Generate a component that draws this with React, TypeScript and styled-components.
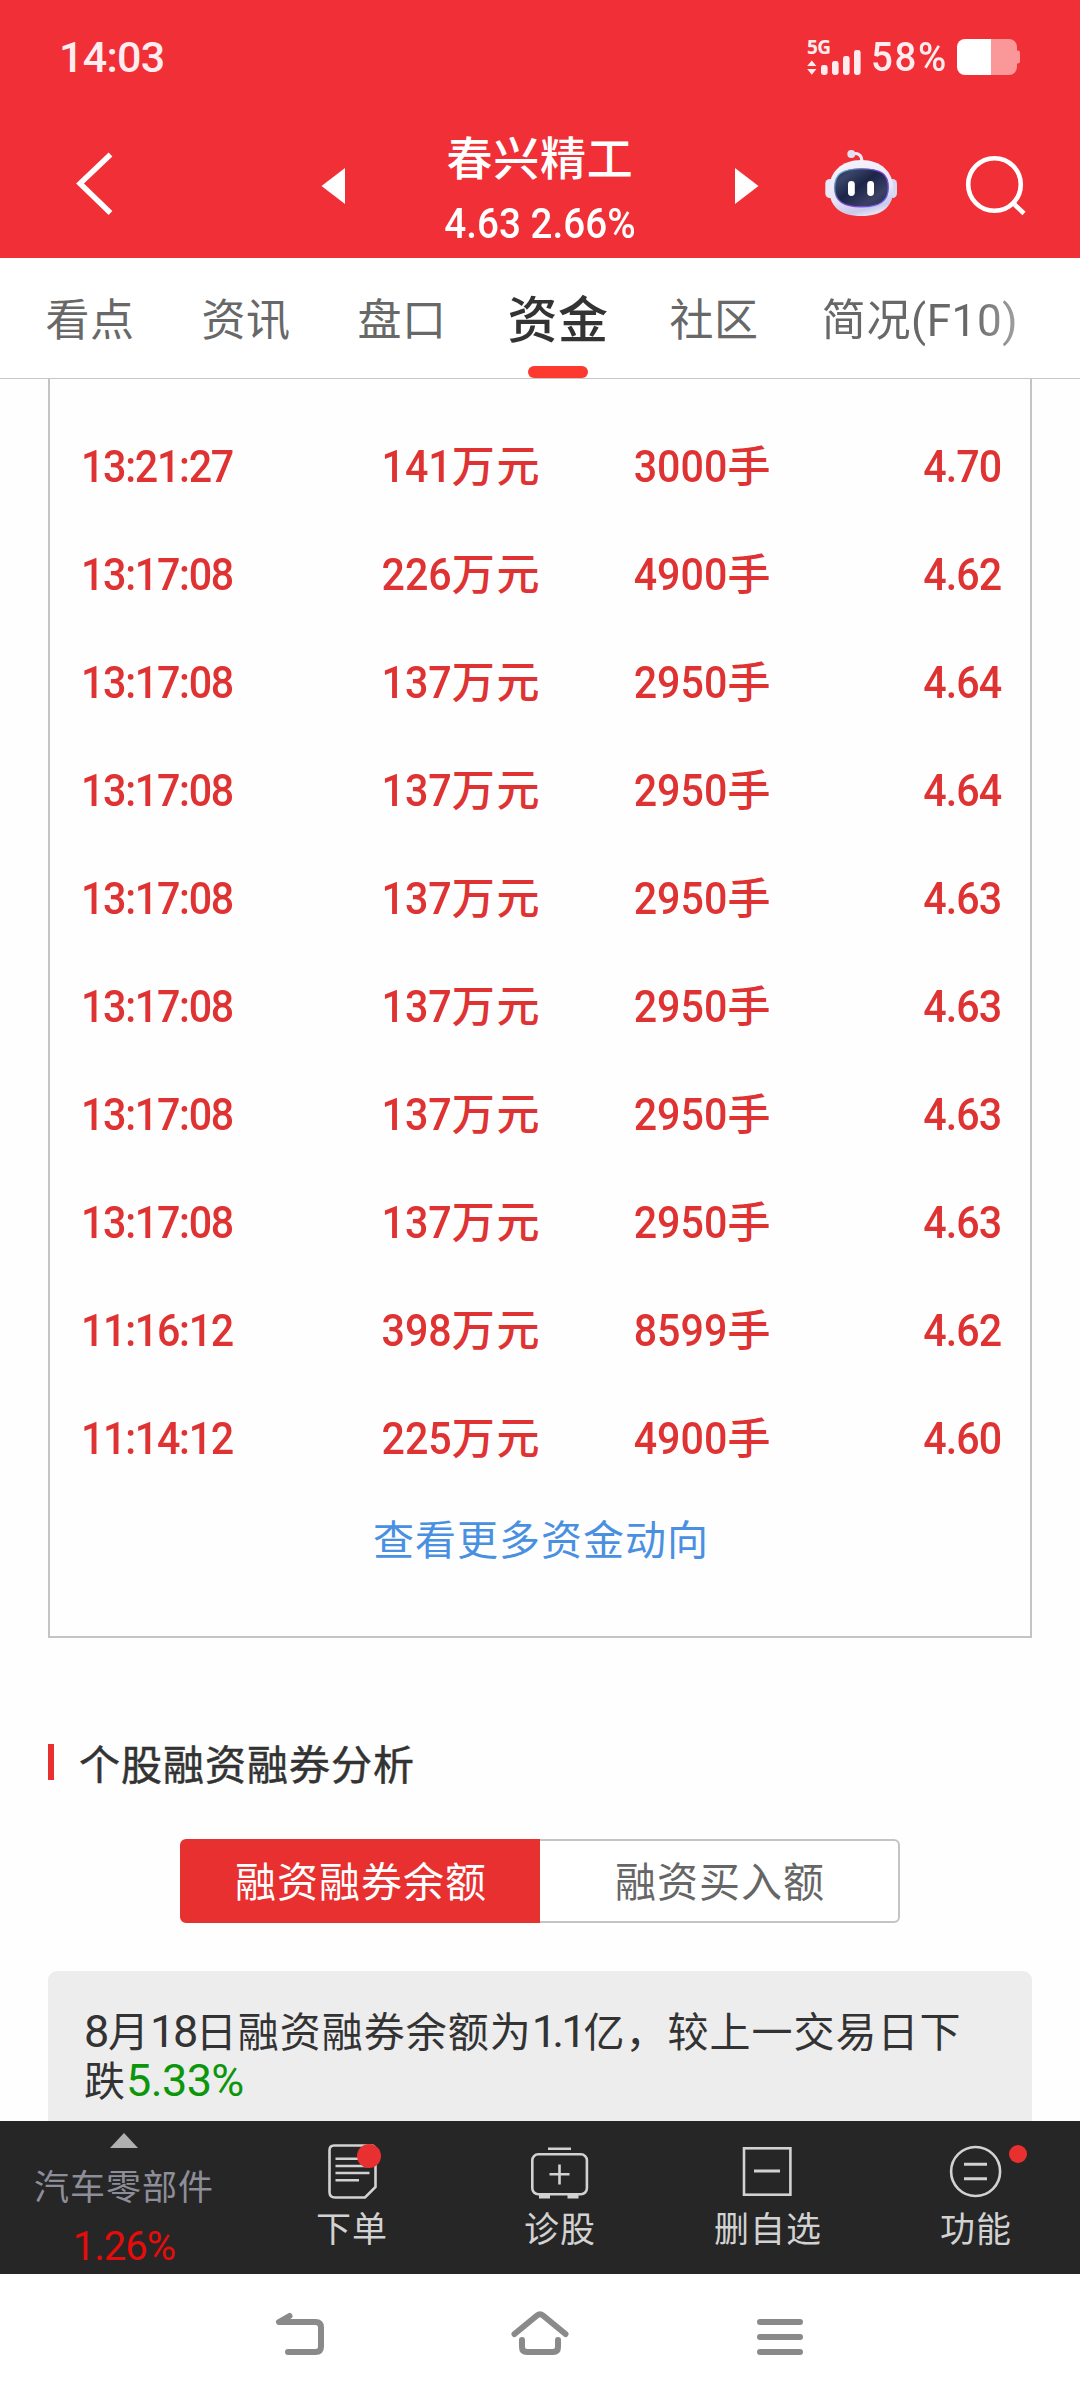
import React from 'react';
import styled, { createGlobalStyle } from 'styled-components';

const GlobalStyle = createGlobalStyle`
  *, *::before, *::after { box-sizing: border-box; }
  body {
    margin: 0;
    background: #fefefe;
    font-family: Roboto, "Noto Sans CJK SC", sans-serif;
    -webkit-font-smoothing: antialiased;
  }
  svg { display: block; flex: none; }
`;

const Screen = styled.div`
  width: 1080px;
  height: 2400px;
  display: flex;
  flex-direction: column;
  overflow: hidden;
  background: #fefefe;
`;

/* Latin digits, narrowed towards a DIN-like width */
const Num = styled.span<{ $scale?: number; $origin?: string; $gap?: number }>`
  display: inline-block;
  letter-spacing: ${p => p.$gap ?? 0}px;
  transform: scaleX(${p => p.$scale ?? 1});
  transform-origin: ${p => p.$origin ?? 'left'} center;
`;

/* ---------- header ---------- */

const Header = styled.header`
  flex: none;
  height: 258px;
  background: #f12f37;
  color: #fff;
`;

const StatusBar = styled.div`
  height: 114px;
  padding: 0 60px 0 59px;
  display: flex;
  align-items: center;
  justify-content: space-between;
`;

const Clock = styled.div`
  font-size: 43px;
  font-weight: 500;
  letter-spacing: -0.7px;
  line-height: 60px;
  color: #ffecee;
`;

const StatusRight = styled.div`
  display: flex;
  align-items: center;
`;

const Signal = styled.div`
  width: 56px;
  height: 36px;
  position: relative;
`;

const NetworkType = styled.span`
  position: absolute;
  left: 0;
  top: -1px;
  font-family: "Noto Sans", sans-serif;
  font-size: 19px;
  font-weight: 700;
  line-height: 18px;
  letter-spacing: -0.5px;
  color: #ffecee;
`;

const BatteryText = styled.span`
  width: 94px;
  padding-left: 8px;
  font-size: 40px;
  font-weight: 500;
  line-height: 38px;
  padding-top: 1px;
  color: #ffecee;
  white-space: nowrap;
`;

const TitleBar = styled.div`
  height: 144px;
  padding-left: 70px;
  display: flex;
  align-items: center;
`;

const TitleBlock = styled.div`
  width: 390px;
  height: 144px;
  padding-top: 12px;
  text-align: center;
  white-space: nowrap;
`;

const StockName = styled.div`
  font-size: 46px;
  font-weight: 500;
  letter-spacing: 0.8px;
  line-height: 66px;
`;

const StockQuote = styled.div`
  font-size: 42px;
  font-weight: 500;
  line-height: 64px;
`;

const Spacer = styled.div<{ $w: number }>`
  flex: none;
  width: ${p => p.$w}px;
`;

/* ---------- tabs ---------- */

const TabBar = styled.nav`
  flex: none;
  height: 121px;
  padding-left: 12px;
  display: flex;
  background: #fff;
  border-bottom: 1px solid #c6c6c6;
`;

const Tab = styled.div<{ $active?: boolean; $wide?: boolean }>`
  position: relative;
  flex: none;
  width: ${p => (p.$wide ? 256 : 156)}px;
  height: 120px;
  text-align: center;
  white-space: nowrap;
  line-height: 127px;
  font-size: ${p => (p.$active ? 50 : 44)}px;
  font-weight: ${p => (p.$active ? 500 : 400)};
  letter-spacing: 0.6px;
  color: ${p => (p.$active ? '#333' : '#686868')};
  ${p => p.$wide && 'mask-image: linear-gradient(to right, #000 180px, transparent 300px);'}
`;

const TabMark = styled.span`
  position: absolute;
  left: 48px;
  bottom: 0;
  width: 60px;
  height: 12px;
  border-radius: 6px;
  background: #fc3a30;
`;

/* ---------- trade list ---------- */

const Content = styled.main`
  flex: none;
  height: 1742px;
  overflow: hidden;
  padding: 0 48px;
`;

const Card = styled.section`
  height: 1259px;
  padding: 34px 29px 0 31px;
  border: 2px solid #c4c4c4;
  border-top: 0;
`;

const TradeRow = styled.div`
  height: 108px;
  display: grid;
  grid-template-columns: 190px 270px 231px 1fr;
  align-items: center;
  font-size: 45px;
  font-weight: 500;
  line-height: 108px;
  color: #df3232;
  white-space: nowrap;
`;

const Cell = styled.div<{ $right?: boolean }>`
  text-align: ${p => (p.$right ? 'right' : 'left')};
`;

const Unit = styled.span`
  font-size: 43px;
  letter-spacing: 1.6px;
`;

const MoreLink = styled.div`
  line-height: 96px;
  text-align: center;
  font-size: 41px;
  letter-spacing: 1px;
  color: #4a90e2;
`;

/* ---------- margin analysis ---------- */

const SectionTitle = styled.h2`
  margin: 94px 0 0;
  height: 68px;
  display: flex;
  align-items: center;
  gap: 25px;
  font-size: 41px;
  font-weight: 400;
  -webkit-text-stroke: 0.5px #333;
  letter-spacing: 1px;
  line-height: 68px;
  color: #333;

  &::before {
    content: '';
    width: 6px;
    height: 36px;
    margin-top: -8px;
    background: #e93030;
  }
`;

const Segmented = styled.div`
  width: 720px;
  height: 84px;
  margin: 39px auto 48px;
  display: grid;
  grid-template-columns: 1fr 1fr;
`;

const Segment = styled.div<{ $on?: boolean }>`
  height: 84px;
  padding-left: 2px;
  border: 2px solid ${p => (p.$on ? '#e23333' : '#c4c4c4')};
  border-left-width: ${p => (p.$on ? 2 : 0)}px;
  border-radius: ${p => (p.$on ? '6px 0 0 6px' : '0 6px 6px 0')};
  background: ${p => (p.$on ? '#e93030' : '#fff')};
  color: ${p => (p.$on ? '#fff' : '#666')};
  text-align: center;
  font-size: 41px;
  letter-spacing: 1px;
  line-height: 84px;
`;

const Summary = styled.div`
  height: 200px;
  padding: 38px 30px 0 36px;
  border-radius: 9px;
  background: #ededed;
  color: #333;
  font-size: 41px;
  letter-spacing: 1px;
  line-height: 49px;
`;

const SumNum = styled.span<{ $gap: number; $down?: boolean }>`
  font-size: 45px;
  font-kerning: none;
  line-height: 40px;
  letter-spacing: ${p => p.$gap}px;
  ${p => p.$down && 'color: #0c960c;'}
`;

/* ---------- bottom bars ---------- */

const ActionBar = styled.footer`
  flex: none;
  height: 153px;
  display: grid;
  grid-template-columns: 248px repeat(4, 208px);
  background: #262626;
  color: #d2d2d2;
`;

const Sector = styled.div`
  display: flex;
  flex-direction: column;
  align-items: center;
  padding-top: 12px;
`;

const SectorName = styled.div`
  margin-top: 17px;
  font-size: 35px;
  letter-spacing: 1px;
  line-height: 48px;
  color: #8e8e99;
`;

const SectorChange = styled.div`
  margin-top: 10px;
  font-size: 40px;
  letter-spacing: -1px;
  line-height: 48px;
  color: #e50c0c;
`;

const Action = styled.div`
  display: flex;
  flex-direction: column;
  align-items: center;
  padding-top: 19px;
  font-size: 35px;
  letter-spacing: 1px;
  line-height: 52px;
`;

const ActionIcon = styled.svg`
  margin-bottom: 3px;
  overflow: visible;
  fill: none;
  stroke: #d2d2d2;
  stroke-width: 2.6;
`;

const SystemNav = styled.div`
  flex: none;
  height: 126px;
  padding: 0 256px;
  display: flex;
  align-items: center;
  justify-content: space-between;
  background: #fff;
`;

const NavIcon = styled.svg`
  fill: none;
  stroke: #8a8a8a;
  stroke-width: 6;
  stroke-linecap: round;
  stroke-linejoin: round;
`;

const tabs = ['看点', '资讯', '盘口', '资金', '社区', '简况(F10)'];

const trades: [string, string, string, string][] = [
  ['13:21:27', '141', '3000', '4.70'],
  ['13:17:08', '226', '4900', '4.62'],
  ['13:17:08', '137', '2950', '4.64'],
  ['13:17:08', '137', '2950', '4.64'],
  ['13:17:08', '137', '2950', '4.63'],
  ['13:17:08', '137', '2950', '4.63'],
  ['13:17:08', '137', '2950', '4.63'],
  ['13:17:08', '137', '2950', '4.63'],
  ['11:16:12', '398', '8599', '4.62'],
  ['11:14:12', '225', '4900', '4.60'],
];

const SignalBars = () => (
  <svg width="56" height="36" viewBox="0 0 56 36" fill="#ffecee">
    <path d="M4.8 21.5 9.4 27H.2ZM.2 30H9.4L4.8 35.8Z" />
    <rect x="14" y="26" width="6.6" height="10" rx="2.4" />
    <rect x="25" y="22" width="6.6" height="14" rx="2.4" />
    <rect x="36" y="17" width="6.6" height="19" rx="2.4" />
    <rect x="47" y="11" width="6.6" height="25" rx="2.4" />
  </svg>
);

const Battery = () => (
  <svg width="63" height="36" viewBox="0 0 63 36">
    <path d="M34 0H52A8 8 0 0 1 60 8V11.5H61A2 2 0 0 1 63 13.5V22.5A2 2 0 0 1 61 24.5H60V28A8 8 0 0 1 52 36H34Z" fill="#f99799" />
    <path d="M34 0H8A8 8 0 0 0 0 8V28A8 8 0 0 0 8 36H34Z" fill="#fff" />
  </svg>
);

const Robot = () => (
  <svg width="74" height="72" viewBox="824 150 74 72">
    <defs>
      <linearGradient id="shell" x1="0.3" y1="0" x2="0.6" y2="1">
        <stop offset="0" stopColor="#f4f3fc" />
        <stop offset="0.6" stopColor="#e8e6f8" />
        <stop offset="0.88" stopColor="#c9c9ea" />
        <stop offset="1" stopColor="#e9e6f6" />
      </linearGradient>
      <linearGradient id="rim" x1="0" y1="0" x2="1" y2="0.7">
        <stop offset="0" stopColor="#7fd9f5" />
        <stop offset="0.3" stopColor="#5a6fb0" />
        <stop offset="0.6" stopColor="#8a3fd8" />
        <stop offset="1" stopColor="#6a5cf0" />
      </linearGradient>
      <linearGradient id="visor" x1="0" y1="0" x2="1" y2="1">
        <stop offset="0" stopColor="#2c3658" />
        <stop offset="0.2" stopColor="#3a4468" />
        <stop offset="0.45" stopColor="#1c2547" />
        <stop offset="0.75" stopColor="#3b4064" />
        <stop offset="1" stopColor="#262c50" />
      </linearGradient>
    </defs>
    <path d="M852 154C858 152.5 862 155 861.8 161" fill="none" stroke="#eceaf8" strokeWidth="3" />
    <circle cx="851.3" cy="154" r="4" fill="#e4e0f4" />
    <rect x="825.3" y="179" width="9" height="19" rx="4.5" fill="#e9e7f8" />
    <rect x="888" y="179" width="9" height="19" rx="4.5" fill="#d8d6f0" />
    <path d="M861.3 160C881 160 893.3 172 893.3 189C893.3 206 883 216 861.3 216C839.500 216 829.3 206 829.3 189C829.3 172 841.500 160 861.3 160Z" fill="url(#shell)" />
    <path d="M861.5 168.800C882 168.800 888.300 174.500 888.300 187.500C888.300 201 880 206.800 861.500 206.800C843 206.800 834.700 201 834.700 187.500C834.700 174.500 841 168.800 861.500 168.800Z" fill="url(#visor)" stroke="url(#rim)" strokeWidth="1.3" />
    <rect x="848" y="181" width="6.8" height="15" rx="3.4" fill="#fff" />
    <rect x="867.2" y="181" width="6.8" height="15" rx="3.4" fill="#fff" />
  </svg>
);

export default function App() {
  return (
    <>
      <GlobalStyle />
      <Screen>
        <Header>
          <StatusBar>
            <Clock>14:03</Clock>
            <StatusRight>
              <Signal>
                <NetworkType>5G</NetworkType>
                <SignalBars />
              </Signal>
              <BatteryText><Num $scale={0.96} $gap={1.8}>58%</Num></BatteryText>
              <Battery />
            </StatusRight>
          </StatusBar>
          <TitleBar>
            <svg width="50" height="72" viewBox="70 150 50 72" fill="none" stroke="#fff" strokeWidth="5.4">
              <path d="M110.5 154.5 80 183.5 110.5 213" />
            </svg>
            <Spacer $w={201} />
            <svg width="24" height="72" viewBox="321 150 24 72" fill="#fff">
              <path d="M321.5 186 345 168V204Z" />
            </svg>
            <TitleBlock>
              <StockName>春兴精工</StockName>
              <StockQuote><Num $scale={0.92} $origin="center">4.63 2.66%</Num></StockQuote>
            </TitleBlock>
            <svg width="24" height="72" viewBox="735 150 24 72" fill="#fff">
              <path d="M758.5 186 735 168V204Z" />
            </svg>
            <Spacer $w={65} />
            <Robot />
            <Spacer $w={62} />
            <svg width="70" height="72" viewBox="960 150 70 72" fill="none" stroke="#fff" strokeWidth="4.6">
              <circle cx="994.5" cy="184.5" r="26.3" />
              <path d="M1012.5 202.5 1024 213.5" />
            </svg>
          </TitleBar>
        </Header>

        <TabBar>
          {tabs.map(t => (
            <Tab key={t} $active={t === '资金'} $wide={t.length > 2}>
              {t}
              {t === '资金' && <TabMark />}
            </Tab>
          ))}
        </TabBar>

        <Content>
          <Card>
            {trades.map(([time, amount, volume, price], i) => (
              <TradeRow key={i}>
                <Cell><Num $scale={0.915} $gap={-1.4}>{time}</Num></Cell>
                <Cell $right><Num $scale={0.915} $origin="right">{amount}</Num><Unit>万元</Unit></Cell>
                <Cell $right><Num $scale={0.915} $origin="right">{volume}</Num><Unit>手</Unit></Cell>
                <Cell $right><Num $scale={0.915} $origin="right" $gap={-1}>{price}</Num></Cell>
              </TradeRow>
            ))}
            <MoreLink>查看更多资金动向</MoreLink>
          </Card>

          <SectionTitle>个股融资融券分析</SectionTitle>

          <Segmented>
            <Segment $on>融资融券余额</Segment>
            <Segment>融资买入额</Segment>
          </Segmented>

          <Summary>
            <SumNum $gap={-1.2}>8</SumNum>月<SumNum $gap={-2.5}>18</SumNum>日融资融券余额为<SumNum $gap={-4.7}>1</SumNum><SumNum $gap={-3}>.1</SumNum>亿，较上一交易日下<br />
            跌<SumNum $gap={-0.6} $down>5.33%</SumNum>
          </Summary>
        </Content>

        <ActionBar>
          <Sector>
            <svg width="28" height="15" viewBox="0 0 28 15"><path d="M14 0 28 15H0Z" fill="#b0b0b0" /></svg>
            <SectorName>汽车零部件</SectorName>
            <SectorChange>1.26%</SectorChange>
          </Sector>
          <Action>
            <ActionIcon width="60" height="62" viewBox="322 2140 60 62">
              <path d="M334 2145.5H371Q375.5 2145.5 375.5 2150V2187L365 2197.5H335Q329.5 2197.5 329.5 2192V2150.5Q329.5 2145.5 334 2145.5Z" />
              <path d="M335.5 2158.8H368M335.5 2166H368M335.5 2173H369.5M335.5 2180.2H359" />
              <circle cx="369" cy="2156" r="12" fill="#e93030" stroke="none" />
            </ActionIcon>
            下单
          </Action>
          <Action>
            <ActionIcon width="60" height="62" viewBox="530 2140 60 62">
              <rect x="532.3" y="2154.3" width="54.6" height="40" rx="6" />
              <path d="M548 2148.8H571M559.5 2164.5V2184.5M549.5 2174.3H569.5" />
              <path d="M539 2196.500H550M567.5 2196.500H578.500" strokeWidth="3.8" />
            </ActionIcon>
            诊股
          </Action>
          <Action>
            <ActionIcon width="60" height="62" viewBox="738 2140 60 62">
              <rect x="744" y="2148.3" width="46.4" height="46.4" />
              <path d="M754 2171H780" strokeWidth="3" />
            </ActionIcon>
            删自选
          </Action>
          <Action>
            <ActionIcon width="60" height="62" viewBox="946 2140 60 62">
              <circle cx="975.6" cy="2171.5" r="24.5" />
              <path d="M964 2164.3H987M964 2178.7H987" strokeWidth="3" />
              <circle cx="1018" cy="2154" r="9" fill="#e93030" stroke="none" />
            </ActionIcon>
            功能
          </Action>
        </ActionBar>

        <SystemNav>
          <NavIcon width="88" height="60" viewBox="256 2307 88 60">
            <path d="M289.5 2316 279 2322H315.5Q321 2322 321 2327.5V2346.5Q321 2352 315.5 2352H288" />
          </NavIcon>
          <NavIcon width="88" height="60" viewBox="496 2307 88 60">
            <path d="M514.5 2334 537 2315.5Q540 2313 543 2315.5L565.5 2334M522 2340V2347Q522 2352 527 2352H553Q558 2352 558 2347V2340" />
          </NavIcon>
          <NavIcon width="88" height="60" viewBox="736 2307 88 60">
            <path d="M760 2322H800M760 2337H800M760 2352H800" />
          </NavIcon>
        </SystemNav>
      </Screen>
    </>
  );
}
